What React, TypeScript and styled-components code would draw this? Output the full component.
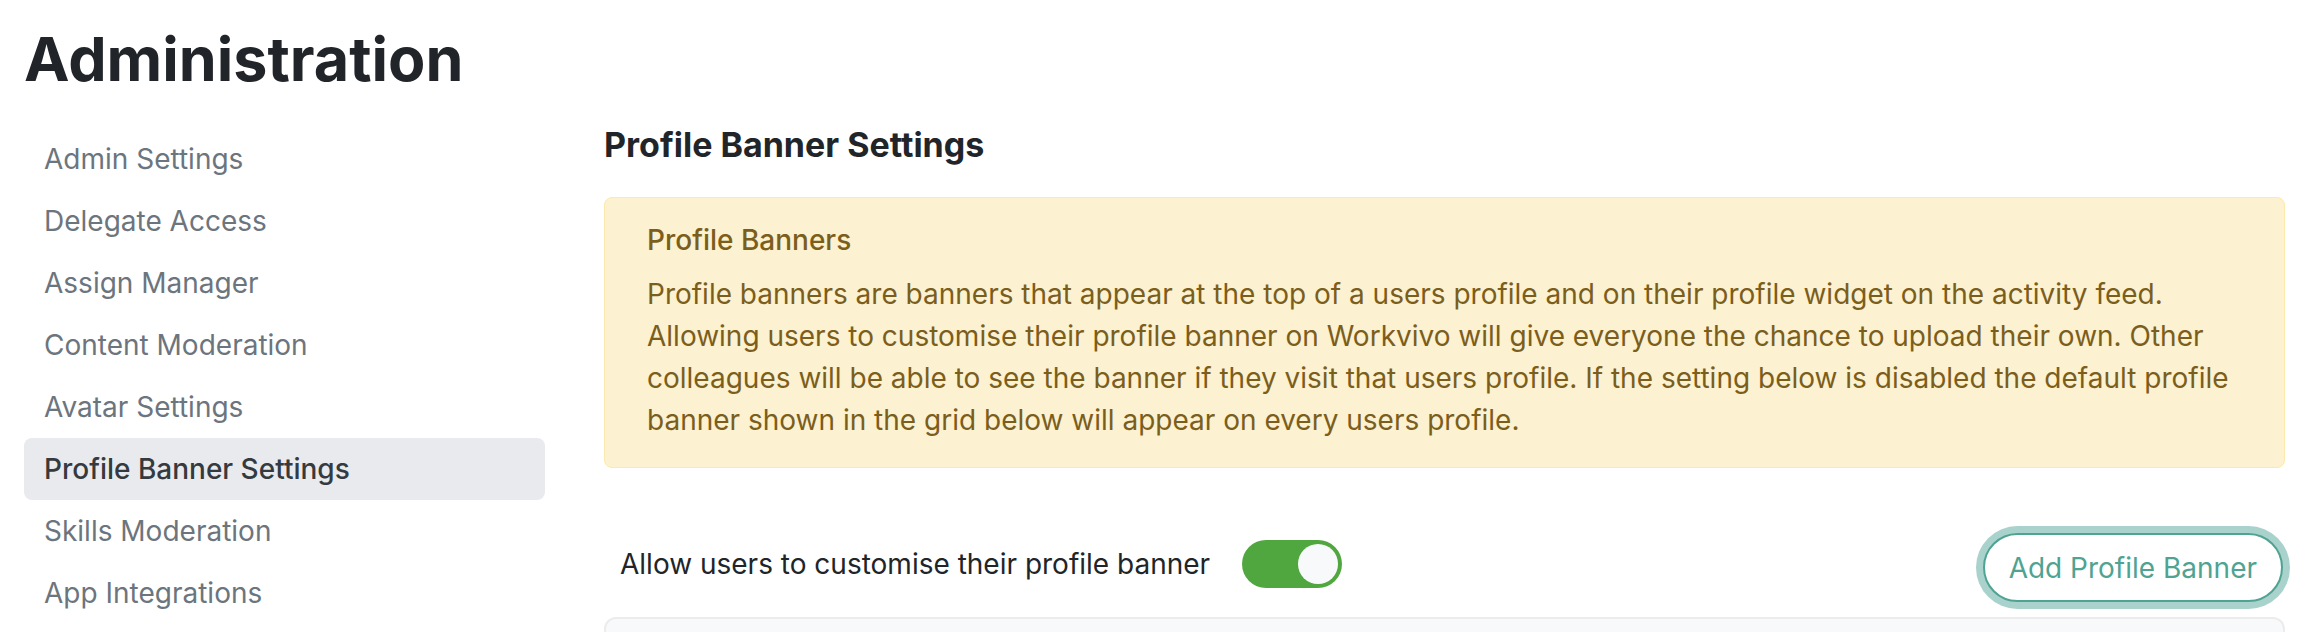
import React from "react";
import styled, { createGlobalStyle } from "styled-components";

const GlobalStyle = createGlobalStyle`
  html, body {
    margin: 0;
    padding: 0;
    background: #ffffff;
  }
  body {
    font-family: Inter, "Noto Sans", "Liberation Sans", sans-serif;
    color: #212529;
    -webkit-font-smoothing: antialiased;
  }
  * { box-sizing: border-box; }
`;

const Page = styled.div`
  padding: 22px 29px 0 24px;
  height: 632px;
  overflow: hidden;
`;

const Title = styled.h1`
  margin: 0;
  font-size: 61px;
  line-height: 74px;
  font-weight: 700;
  color: #212529;
`;

const Layout = styled.div`
  display: flex;
  gap: 59px;
  margin-top: 32px;
`;

const Sidebar = styled.nav`
  width: 521px;
  flex-shrink: 0;
  display: flex;
  flex-direction: column;
`;

const NavItem = styled.a<{ $active?: boolean }>`
  display: flex;
  align-items: center;
  height: 62px;
  padding: 0 20px;
  border-radius: 8px;
  font-size: 28px;
  line-height: 1.5;
  text-decoration: none;
  color: ${(p) => (p.$active ? "#343a40" : "#6c757d")};
  background: ${(p) => (p.$active ? "#e9eaee" : "transparent")};
  font-weight: ${(p) => (p.$active ? 500 : 400)};
`;

const Main = styled.main`
  flex: 1;
  min-width: 0;
  display: flex;
  flex-direction: column;
`;

const Heading = styled.h2`
  margin: 0 0 35px;
  font-size: 34px;
  line-height: 34px;
  font-weight: 700;
  color: #212529;
`;

const Notice = styled.div`
  background: #fcf1d0;
  border: 1px solid #faeaae;
  border-radius: 8px;
  padding: 21px 42px 26px;
  color: #7b5e1c;
`;

const NoticeTitle = styled.div`
  font-size: 28px;
  line-height: 42px;
  font-weight: 500;
  margin-bottom: 12px;
`;

const NoticeText = styled.p`
  margin: 0;
  font-size: 28px;
  line-height: 42px;
`;

const ToggleRow = styled.div`
  display: flex;
  align-items: center;
  justify-content: space-between;
  height: 69px;
  margin: 65px 2px 15px 0;
  padding-left: 16px;
`;

const ToggleGroup = styled.label`
  display: flex;
  align-items: center;
  gap: 32px;
  padding-bottom: 8px;
  font-size: 28px;
  color: #212529;
`;

const Track = styled.span<{ $on: boolean }>`
  display: inline-flex;
  align-items: center;
  justify-content: ${(p) => (p.$on ? "flex-end" : "flex-start")};
  width: 100px;
  height: 48px;
  padding: 4px;
  border-radius: 24px;
  background: ${(p) => (p.$on ? "#51a73f" : "#ced4da")};
`;

const Knob = styled.span`
  width: 40px;
  height: 40px;
  border-radius: 50%;
  background: #f8f9fa;
`;

const OutlineButton = styled.button`
  height: 69px;
  padding: 0 24px;
  border: 2px solid #4fa393;
  border-radius: 35px;
  background: #ffffff;
  color: #4fa393;
  font-family: inherit;
  font-size: 28px;
  box-shadow: 0 0 0 7px rgba(82, 165, 151, 0.5);
  cursor: pointer;
`;

const Panel = styled.div`
  height: 120px;
  background: #f8f9fa;
  border: 2px solid #ececec;
  border-radius: 12px;
`;

const navItems = [
  "Admin Settings",
  "Delegate Access",
  "Assign Manager",
  "Content Moderation",
  "Avatar Settings",
  "Profile Banner Settings",
  "Skills Moderation",
  "App Integrations",
];

export default function App() {
  return (
    <>
      <GlobalStyle />
      <Page>
        <Title>Administration</Title>
        <Layout>
          <Sidebar>
            {navItems.map((item) => (
              <NavItem key={item} $active={item === "Profile Banner Settings"}>
                {item}
              </NavItem>
            ))}
          </Sidebar>
          <Main>
            <Heading>Profile Banner Settings</Heading>
            <Notice>
              <NoticeTitle>Profile Banners</NoticeTitle>
              <NoticeText>
                Profile banners are banners that appear at the top of a users profile and on their profile widget on the activity feed.
                Allowing users to customise their profile banner on Workvivo will give everyone the chance to upload their own. Other
                colleagues will be able to see the banner if they visit that users profile. If the setting below is disabled the default profile
                banner shown in the grid below will appear on every users profile.
              </NoticeText>
            </Notice>
            <ToggleRow>
              <ToggleGroup>
                Allow users to customise their profile banner
                <Track $on={true}>
                  <Knob />
                </Track>
              </ToggleGroup>
              <OutlineButton>Add Profile Banner</OutlineButton>
            </ToggleRow>
            <Panel />
          </Main>
        </Layout>
      </Page>
    </>
  );
}
